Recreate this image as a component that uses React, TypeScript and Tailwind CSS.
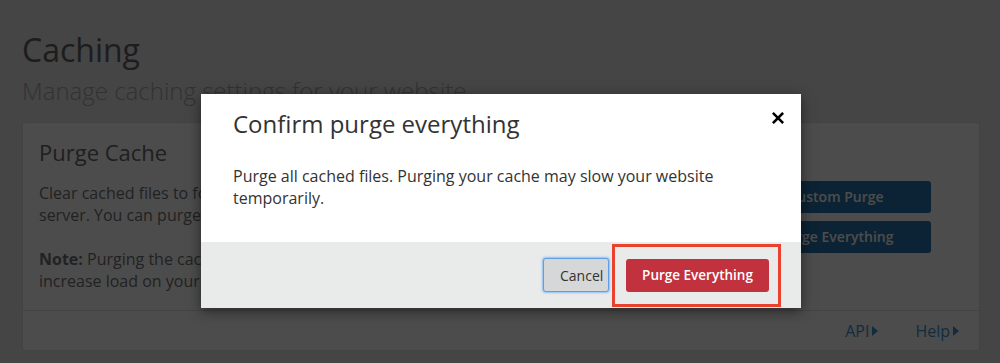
import React from "react"

const font = { fontFamily: '"Open Sans", "Liberation Sans", sans-serif' }

function Caret() {
  return (
    <svg className="ml-[3px] h-[10px] w-[6px]" viewBox="0 0 6 10" fill="currentColor">
      <polygon points="0,0 6,5 0,10" />
    </svg>
  )
}

export default function App() {
  return (
    <div className="relative h-[363px] w-[1000px] overflow-hidden bg-[#e7e7e7]" style={font}>
      {/* Page underneath */}
      <div className="pl-[22px] pr-[20px] pt-[30px]">
        <h1 className="text-[32px] leading-[40px] text-[#626262]">Caching</h1>
        <p className="mt-[5px] text-[24px] leading-[32px] font-light text-[#a8a8a8]">
          Manage caching settings for your website
        </p>

        <div className="mt-[15px] rounded-[3px] border border-[#dcdcdc] bg-white">
          <div className="flex">
            <div className="min-w-0 flex-1 overflow-hidden px-4 pt-[14px] pb-[18px]">
              <h2 className="text-[22px] leading-[30px] text-[#6a6a6a]">Purge Cache</h2>
              <div className="mt-[15px] text-[16px] leading-[22px] text-[#727272]">
                <p className="whitespace-nowrap">
                  Clear cached files to force Cloudflare to fetch a fresh version of those files from your web
                  <br />
                  server. You can purge files selectively or all at once.
                </p>
                <p className="mt-[22px] whitespace-nowrap">
                  <b className="font-bold">Note:</b> Purging the cache may temporarily degrade performance for your
                  website and
                  <br />
                  increase load on your origin.
                </p>
              </div>
            </div>
            <div className="flex w-[287px] shrink-0 flex-col justify-center gap-2 border-l border-[#dcdcdc] px-12">
              <button className="h-[32px] rounded-[3px] bg-[#2575ad] text-[14px] font-semibold text-white">
                Custom Purge
              </button>
              <button className="h-[32px] rounded-[3px] bg-[#2575ad] text-[14px] font-semibold text-white">
                Purge Everything
              </button>
            </div>
          </div>
          <div className="flex h-[40px] items-center justify-end gap-[37px] border-t border-[#e0e0e0] pr-[20px] text-[16px] text-[#3f94d4]">
            <span className="flex items-center">API<Caret /></span>
            <span className="flex items-center">Help<Caret /></span>
          </div>
        </div>
      </div>

      {/* Backdrop */}
      <div className="absolute inset-0 bg-black/70" />

      {/* Modal */}
      <div className="absolute left-[201px] top-[94px] w-[600px] bg-white shadow-[0_3px_12px_rgba(0,0,0,0.5)]">
        <button className="absolute right-[17px] top-[18px] text-black" aria-label="Close">
          <svg className="h-[12px] w-[12px]" viewBox="0 0 12 12" stroke="currentColor" strokeWidth={2.6} strokeLinecap="square">
            <path d="M1.8 1.8l8.4 8.4M10.2 1.8l-8.4 8.4" />
          </svg>
        </button>
        <h3 className="px-8 pt-[14px] text-[24px] leading-[32px] text-[#333]">Confirm purge everything</h3>
        <p className="mt-[25px] px-8 pb-[33px] text-[16px] leading-[22px] text-[#333]">
          Purge all cached files. Purging your cache may slow your website temporarily.
        </p>
        <div className="flex items-center justify-end gap-[17px] bg-[#e9eaea] py-4 pr-8">
          <button className="flex h-[34px] w-[66px] items-center rounded-[3px] border border-[#5e9ee6] bg-[#d6d7d8] pl-[16px] text-[14px] text-[#333] shadow-[0_0_2px_1px_#8ebef2]">
            Cancel
          </button>
          <span className="relative">
            <button className="h-[33px] w-[143px] rounded-[3px] bg-[#c1313e] text-[13.5px] font-semibold text-white">
              Purge Everything
            </button>
            <span className="absolute -bottom-[15px] -left-[14px] -right-[12px] -top-[15px] border-[3px] border-[#e8412e]" />
          </span>
        </div>
      </div>
    </div>
  )
}
